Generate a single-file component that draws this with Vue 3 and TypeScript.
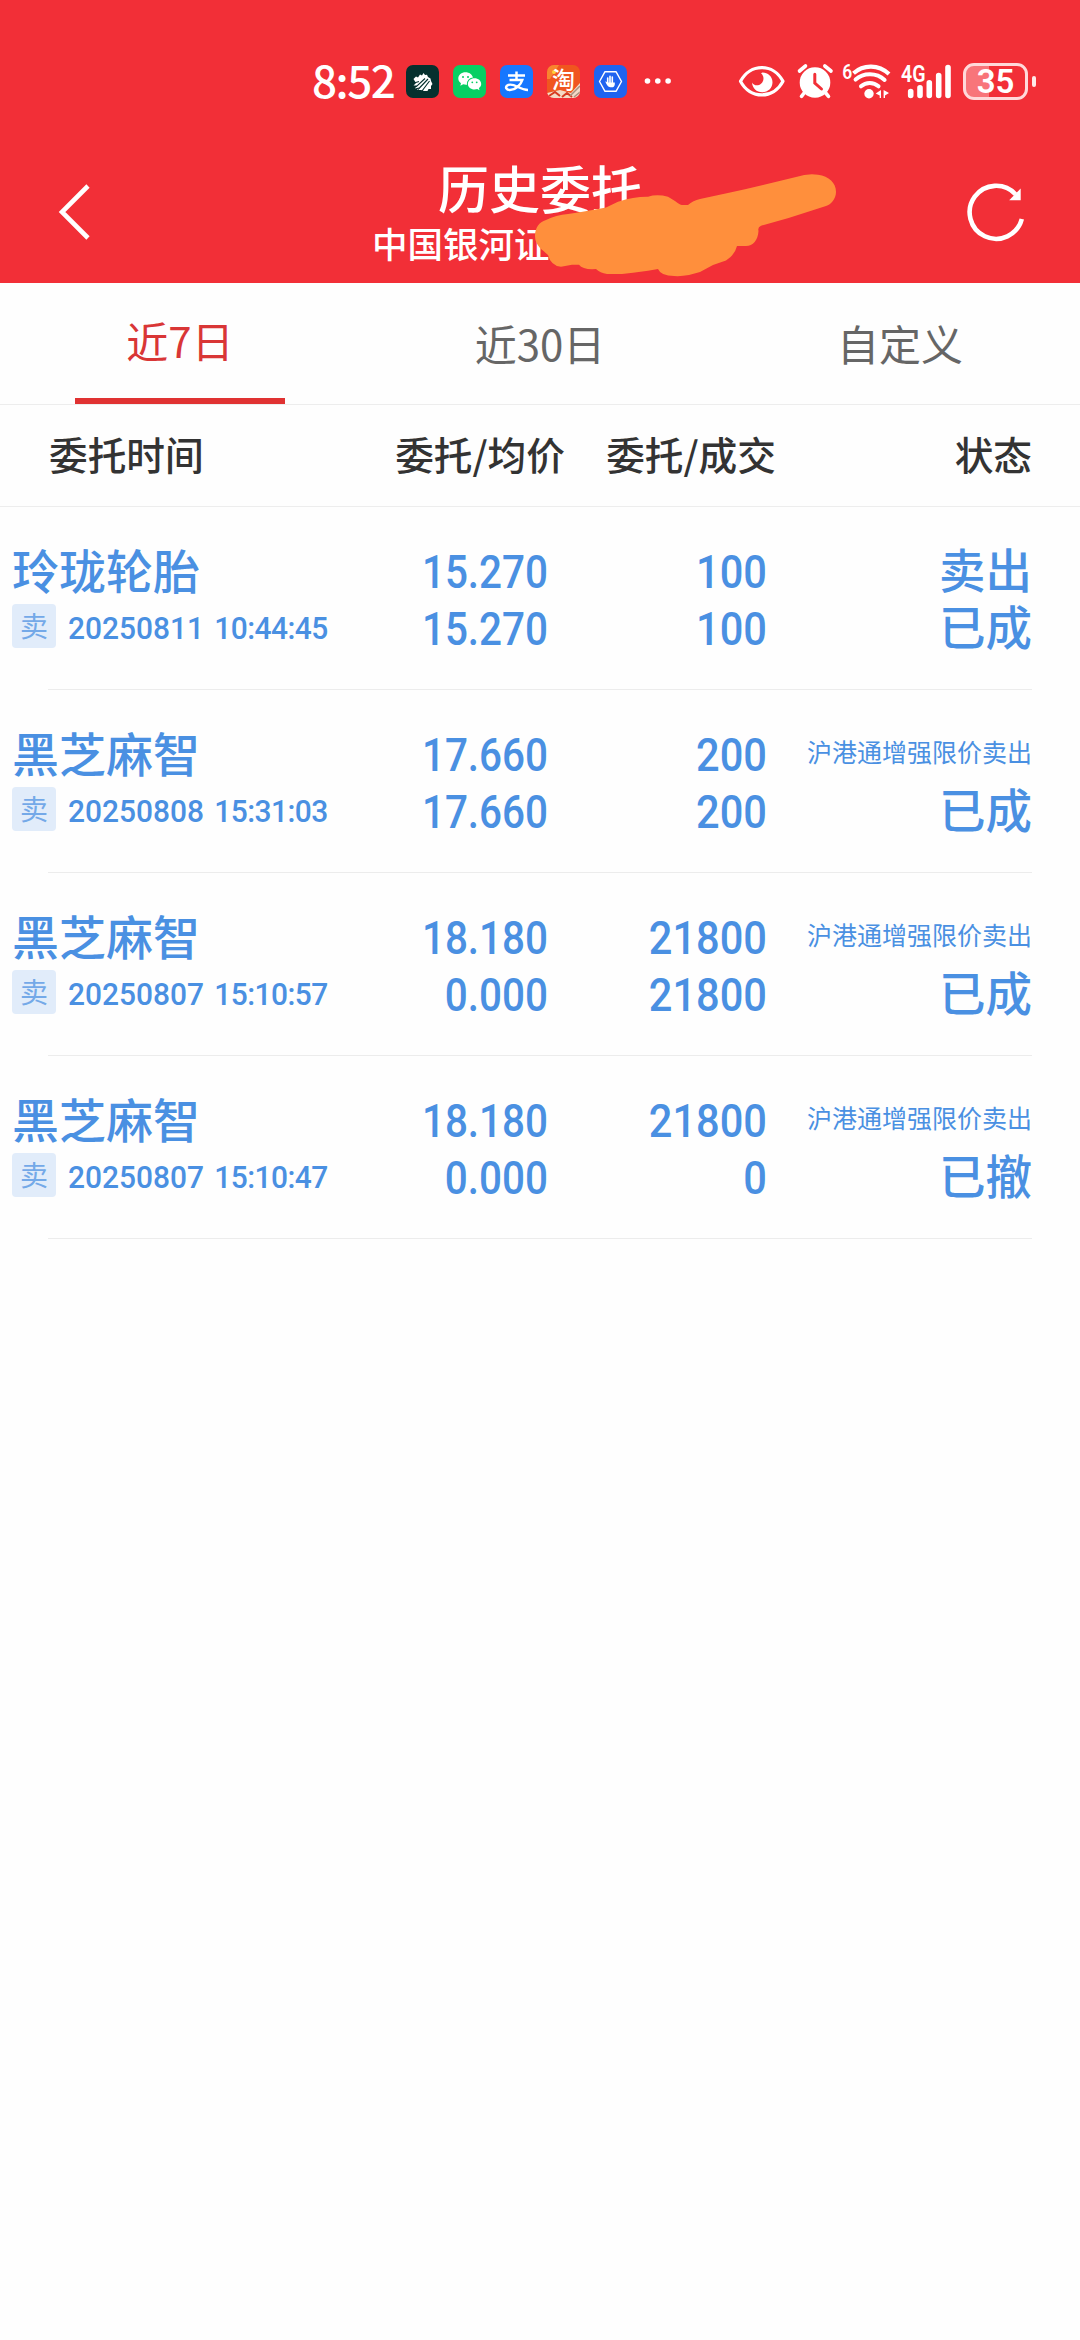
<script setup lang="ts">
interface Order {
  name: string
  date: string
  time: string
  price: string
  avgPrice: string
  amount: string
  dealt: string
  kind: string
  state: string
}

const tabs: string[] = ['近7日', '近30日', '自定义']
const activeTab = 0

const orders: Order[] = [
  { name: '玲珑轮胎', date: '20250811', time: '10:44:45', price: '15.270', avgPrice: '15.270', amount: '100', dealt: '100', kind: '卖出', state: '已成' },
  { name: '黑芝麻智', date: '20250808', time: '15:31:03', price: '17.660', avgPrice: '17.660', amount: '200', dealt: '200', kind: '沪港通增强限价卖出', state: '已成' },
  { name: '黑芝麻智', date: '20250807', time: '15:10:57', price: '18.180', avgPrice: '0.000', amount: '21800', dealt: '21800', kind: '沪港通增强限价卖出', state: '已成' },
  { name: '黑芝麻智', date: '20250807', time: '15:10:47', price: '18.180', avgPrice: '0.000', amount: '21800', dealt: '0', kind: '沪港通增强限价卖出', state: '已撤' },
]
</script>

<template>
  <div class="page">
    <header class="top">
      <div class="status-bar">
        <span class="clock">8:52</span>
        <div class="apps">
          <svg width="33" height="33" viewBox="0 0 33 33">
            <rect width="33" height="33" rx="7" fill="#05302e" />
            <path d="M7.500 14 L10 11.500 L12 12.500 L14 9.500 L16 10.500 L17.500 8 L19 10 L21 9.800 L22 12 L24.500 13.500 L25 16 L26.500 19 L25 21 L25 24 L22.500 24 L21.500 26 H18 L15 25 H11 L13 22.500 L9 23.500 L11 20.500 L7.500 20.500 L10 18 Z" fill="#fff" />
            <path d="M6.500 18.500 L13 16.500 M10 21.800 L19 13.500 M12 24.500 L22 14 M16 26 L23.500 16" stroke="#05302e" stroke-width="1.100" />
          </svg>
          <svg width="33" height="33" viewBox="0 0 33 33">
            <rect width="33" height="33" rx="7" fill="#07cf63" />
            <path d="M12.500 7.300 C8.500 7.300 5.300 10 5.300 13.500 C5.300 15.500 6.400 17.200 8 18.300 L7.300 20.800 L10.200 19.300 C11.500 19.700 12.800 19.800 14 19.700 C13.400 15.800 17 12.600 20 12.600 C19.300 9.500 16.200 7.300 12.500 7.300 Z" fill="#fff" />
            <path d="M21.500 13.300 C17.800 13.300 14.900 15.700 14.900 18.900 C14.900 22 17.800 24.400 21.500 24.400 C22.500 24.400 23.400 24.200 24.200 23.900 L26.500 25.200 L25.900 23 C27.400 22 28.200 20.600 28.200 18.900 C28.200 15.700 25.200 13.300 21.500 13.300 Z" fill="#fff" />
            <g fill="#07cf63"><circle cx="10" cy="12" r="1" /><circle cx="15" cy="12" r="1" /><circle cx="19.300" cy="17.300" r=".9" /><circle cx="23.700" cy="17.300" r=".9" /></g>
          </svg>
          <svg width="33" height="33" viewBox="0 0 33 33">
            <rect width="33" height="33" rx="7" fill="#1677ff" />
            <path d="M8 10.500 H25 M16.500 6.500 V15 M9.500 15 H22.300 C21 19.500 15.500 25 10 25 C6 25 5.300 22.300 7 20.700 C9.500 18.500 14 20 18 22 C21.500 23.800 25 25 28 25" fill="none" stroke="#fff" stroke-width="2.500" />
          </svg>
          <svg width="33" height="33" viewBox="0 0 33 33">
            <defs><clipPath id="tb"><rect width="33" height="33" rx="7" /></clipPath></defs>
            <g clip-path="url(#tb)">
              <rect width="33" height="33" fill="#f0561f" />
              <path d="M0 0 H12 L7 8 L3 14 H0 Z" fill="#f8852e" />
              <circle cx="7" cy="7" r="2" fill="#ffd23b" />
              <path d="M0 28 L13 25 L24 28 L33 18 V33 H0 Z" fill="#f4d9c6" />
              <path d="M2 31 L8 27 L13 31 M15 32 L20 28 L25 32" fill="none" stroke="#d63a22" stroke-width="2" />
              <path d="M23 31 L33 21 M27 32 L33 27" stroke="#a9907f" stroke-width="1.500" />
            </g>
            <text x="16.500" y="22.500" text-anchor="middle" font-size="23" font-weight="500" fill="#fff">淘</text>
          </svg>
          <svg width="33" height="33" viewBox="0 0 33 33">
            <rect width="33" height="33" rx="7" fill="#1f63f0" />
            <path d="M11 6.700 H22 L27.500 16.500 L22 26.300 H11 L5.500 16.500 Z" fill="none" stroke="#fff" stroke-width="1.400" stroke-linejoin="round" />
            <path d="M13.700 13 V19 M16 11.200 V19 M18.300 12 V19" stroke="#fff" stroke-width="1.600" stroke-linecap="round" />
            <path d="M11.300 16.500 C12.500 16 13.200 17.500 13.200 17.500 H20.800 V19.500 C20.500 21.500 19.500 22.300 17.500 22.300 C14.500 22.300 13.500 21.300 11.300 16.500 Z" fill="#fff" />
          </svg>
        </div>
        <svg class="more" width="28" height="8" viewBox="0 0 28 8">
          <g fill="#fff"><circle cx="3.500" cy="4" r="2.800" /><circle cx="13.800" cy="4" r="2.800" /><circle cx="24.100" cy="4" r="2.800" /></g>
        </svg>
        <svg class="system" width="230" height="40" viewBox="735 60 230 40">
          <path d="M740.500 80.300 C750 62 773.500 62 783 80.300 C773.500 98.500 750 98.500 740.500 80.300 Z" fill="none" stroke="#fff" stroke-width="3.200" stroke-linejoin="round" />
          <path d="M762.500 71.600 C767.500 71.500 772.500 75.300 772.500 81.300 C772.500 87 768 91.300 762.300 91.300 C756.600 91.300 752.300 87 752 81.500 C753.500 84.500 758 85.400 761 82.800 C764.300 80 764.300 75 761 72.300 Z" fill="#fff" />
          <circle cx="815" cy="81.500" r="15.300" fill="#fff" />
          <path d="M799.500 70 L805.500 65 M824.800 65 L831 70 M804.500 91.500 L801.500 95.300 M825.300 91.500 L828.500 95.300" stroke="#fff" stroke-width="3.600" stroke-linecap="round" />
          <path d="M814.800 73.300 V82 L821.500 88" fill="none" stroke="#f22f37" stroke-width="3" stroke-linecap="round" />
          <text class="label" x="842.300" y="78" font-size="21" textLength="10" lengthAdjust="spacingAndGlyphs" fill="#fff">6</text>
          <path d="M853.500 72.200 C863.500 63.300 878.500 63.300 889 73" fill="none" stroke="#fff" stroke-width="4.200" />
          <path d="M855.600 78.600 C863.500 71.500 876.500 71.500 884.600 79" fill="none" stroke="#fff" stroke-width="4" stroke-linecap="round" />
          <path d="M861 85.300 C866 80.800 873.500 80.800 878.500 85.300" fill="none" stroke="#fff" stroke-width="4" stroke-linecap="round" />
          <circle cx="869" cy="92.700" r="4.700" fill="#fff" />
          <path d="M881 89 V97 H879.700 V94.500 L875.700 92.500 Z M883.600 89 L889 92 L885 94.500 V97 H883.600 Z" fill="#fff" />
          <text class="label" x="901" y="80.500" font-size="23.500" textLength="24.500" lengthAdjust="spacingAndGlyphs" fill="#fff">4G</text>
          <path d="M910.700 90.500 V94.500 M920 86.800 V94.500 M929.300 81.800 V94.500 M938.700 74.500 V94.500 M948 66.500 V94.500" stroke="#fff" stroke-width="5.600" stroke-linecap="round" />
        </svg>
        <div class="battery"><span>35</span></div>
        <i class="nub"></i>
      </div>

      <nav class="nav-bar">
        <svg class="back" width="34" height="60" viewBox="0 0 34 60">
          <path d="M31 4 L5 30 L31 56" fill="none" stroke="#fff" stroke-width="4.600" />
        </svg>
        <div class="titles">
          <h1>历史委托</h1>
          <p>中国银河证</p>
          <svg class="scribble" width="304" height="106" viewBox="534 172 304 106">
            <path d="M535 236 C535 228 539 222 546 220 Q556 215 568 214 Q582 212 592.500 210 L606 207.500 L618 201.700 Q634 196.500 648 196.700 Q657 194 668 196.700 L675 201 Q680 205 682 205 H688 Q693 200.500 700 199 L729 192.700 L745 189.300 L763 185 L796 177 Q808 173 818 174.700 C829 176 836 183 836 191.700 C836 199 831 204.500 826 206 L788.600 218 L761 225.700 Q757.500 227 758.500 231 C758 240 753 246 746 246 H737 Q735 255 726 260.500 L713 265 L700 272 L689 275 Q681 276.500 674 276 Q661 276 658 269 L648 270.700 L633 272.700 L622 274 H607 Q600 273 596 269 Q583 270 579 264.700 H572 L561 266.700 Q551 266 548 255 C543 250 535 246 535 236 Z" fill="#ff8f3c" />
          </svg>
        </div>
        <svg class="refresh" width="62" height="62" viewBox="966 181 62 62">
          <path d="M1021.800 219 A26.500 26.500 0 1 1 1015.500 194.200" fill="none" stroke="#fff" stroke-width="4.600" />
          <path d="M1020.700 188.500 V200.200 H1009.200 Z" fill="#fff" />
        </svg>
      </nav>
    </header>

    <div class="tabs">
      <div v-for="(tab, i) in tabs" :key="tab" class="tab" :class="{ active: i === activeTab }">
        <span>{{ tab }}</span>
      </div>
    </div>

    <div class="columns">
      <span>委托时间</span>
      <span>委托/均价</span>
      <span>委托/成交</span>
      <span>状态</span>
    </div>

    <section v-for="order in orders" :key="order.date + order.time" class="order">
      <div class="cells">
        <div class="stock">
          <div class="name">{{ order.name }}</div>
          <div class="when">
            <span class="tag">卖</span>
            <span class="stamp">{{ order.date }} <span class="time">{{ order.time }}</span></span>
          </div>
        </div>
        <div class="num"><div>{{ order.price }}</div><div>{{ order.avgPrice }}</div></div>
        <div class="num amount"><div>{{ order.amount }}</div><div>{{ order.dealt }}</div></div>
        <div class="state">
          <div :class="{ long: order.kind.length > 4 }">{{ order.kind }}</div>
          <div>{{ order.state }}</div>
        </div>
      </div>
      <div class="divider"></div>
    </section>
  </div>
</template>

<style>
body {
  background: #fff;
}
</style>

<style scoped>
.page {
  width: 1080px;
  height: 2340px;
  overflow: hidden;
  background: #fefefe;
  font-family: "Noto Sans CJK SC", sans-serif;
}
svg {
  display: block;
  flex: none;
  overflow: visible;
}
.top {
  height: 283px;
  background: #f22f37;
  color: #fff;
}
.status-bar {
  display: flex;
  align-items: center;
  height: 162px;
  padding-left: 312px;
}
.clock {
  width: 94px;
  padding-bottom: 5px;
  font-size: 44px;
  line-height: 60px;
  font-weight: 500;
  letter-spacing: -1.500px;
}
.label {
  font-family: Roboto, sans-serif;
  font-weight: 600;
}
.apps {
  display: flex;
  gap: 14px;
}
.more {
  margin-left: 17px;
}
.system {
  margin-left: 63px;
}
.battery {
  display: flex;
  flex: none;
  align-items: center;
  justify-content: center;
  box-sizing: border-box;
  width: 65px;
  height: 37px;
  margin-left: -2px;
  border: 3px solid #ffd9da;
  border-radius: 11px;
  background: linear-gradient(to right, #f8757a 23px, transparent 23px);
  font-family: Roboto, sans-serif;
  font-size: 33px;
  font-weight: 600;
  line-height: 33px;
}
.nub {
  width: 4px;
  height: 11px;
  margin-left: 4px;
  border-radius: 2px;
  background: #ffe9e9;
}
.nav-bar {
  display: flex;
  height: 121px;
}
.back {
  margin: 20px 0 0 57px;
}
.titles {
  position: relative;
  width: 700px;
  margin-left: 99px;
}
.titles h1 {
  margin: 0;
  text-align: center;
  font-size: 51px;
  line-height: 50px;
  font-weight: 500;
}
.titles p {
  margin: 6px 0 0 182px;
  font-size: 35.500px;
  line-height: 50px;
  font-weight: 500;
}
.scribble {
  position: absolute;
  left: 344px;
  top: 10px;
}
.refresh {
  margin: 19px 0 0 76px;
}
.tabs {
  display: flex;
  height: 121px;
  border-bottom: 1px solid #ededed;
}
.tab {
  display: flex;
  flex: 1;
  justify-content: center;
  box-sizing: border-box;
  height: 121px;
  padding-top: 30px;
  color: #666;
  font-size: 42px;
  line-height: 60px;
}
.tab.active {
  flex: none;
  width: 210px;
  margin: 0 75px;
  padding-top: 27px;
  border-bottom: 6px solid #e03232;
  color: #d93636;
}
.columns {
  display: flex;
  box-sizing: border-box;
  height: 102px;
  padding-top: 19px;
  border-bottom: 1px solid #ededed;
  color: #333;
  font-size: 38.700px;
  line-height: 58px;
  font-weight: 500;
}
.columns span {
  text-align: right;
}
.columns span:nth-child(1) {
  width: 311px;
  padding-left: 49px;
  text-align: left;
}
.columns span:nth-child(2) {
  width: 205px;
}
.columns span:nth-child(3) {
  width: 211px;
}
.columns span:nth-child(4) {
  width: 256px;
}
.order {
  color: #4a90e2;
}
.cells {
  display: grid;
  grid-template-columns: 344px 204px 219px 265px;
  height: 182px;
}
.divider {
  height: 1px;
  margin: 0 48px;
  background: #ececec;
}
.stock {
  padding: 33px 0 0 12px;
}
.name {
  font-size: 47px;
  line-height: 57px;
  font-weight: 500;
}
.when {
  display: flex;
  align-items: center;
  margin-top: 7px;
}
.tag {
  flex: none;
  width: 44px;
  height: 44px;
  border-radius: 4px;
  background: #e1ecfa;
  color: #74a9e8;
  text-align: center;
  font-size: 28px;
  line-height: 42px;
}
.stamp {
  margin: 3px 0 0 12px;
  transform: scaleX(0.935);
  transform-origin: left center;
  font-family: Roboto, sans-serif;
  font-size: 32px;
  font-weight: 500;
  word-spacing: 3px;
  white-space: nowrap;
}
.time {
  letter-spacing: -0.600px;
}
.num {
  padding-top: 36px;
  transform: scaleX(0.86);
  transform-origin: right center;
  text-align: right;
  font-family: Roboto, sans-serif;
  font-size: 47px;
  line-height: 57px;
  font-weight: 500;
}
.num.amount {
  transform: scaleX(0.885);
}
.state {
  padding-top: 33px;
  text-align: right;
  font-size: 46.500px;
  line-height: 56.500px;
  font-weight: 500;
}
.state .long {
  font-size: 25px;
  font-weight: 400;
  white-space: nowrap;
}
</style>
